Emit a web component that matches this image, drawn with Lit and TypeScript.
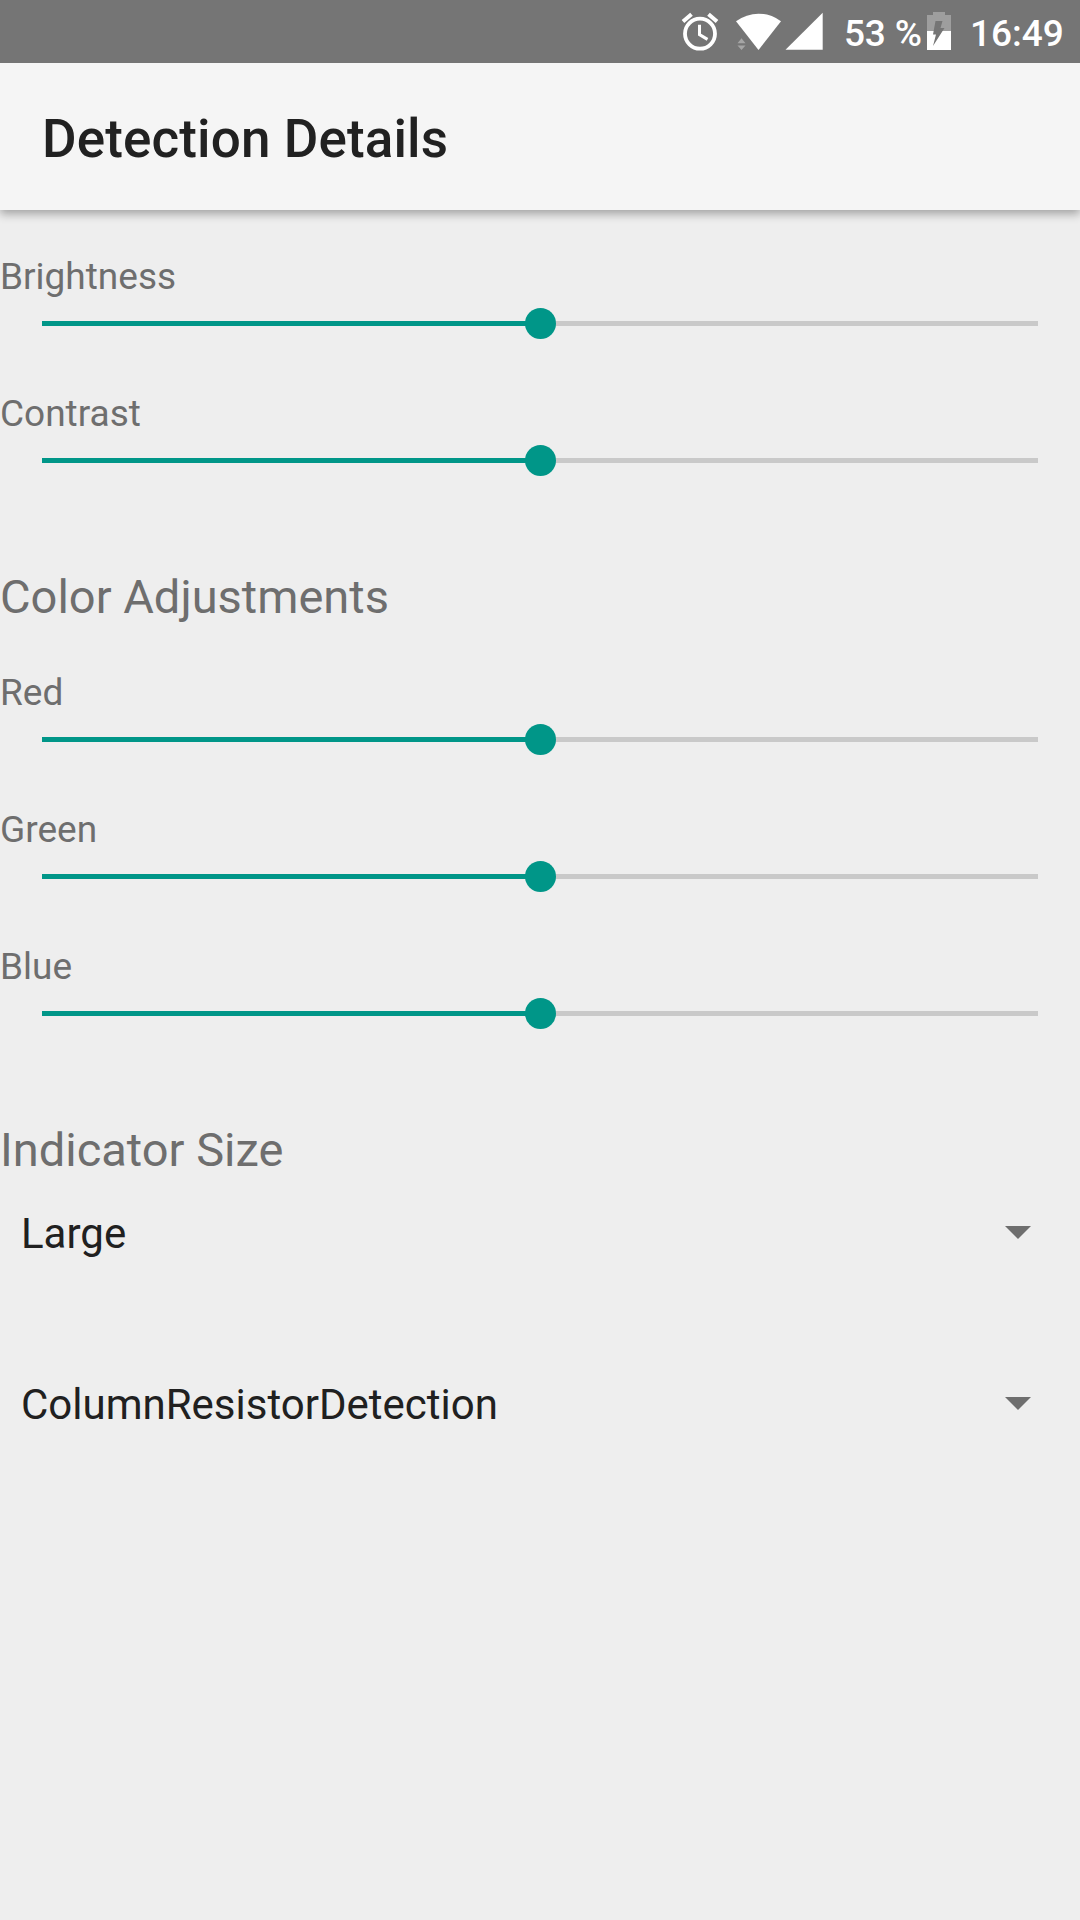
import { LitElement, html, css } from "lit";
import { customElement, property } from "lit/decorators.js";

@customElement("status-bar")
class StatusBar extends LitElement {
  static styles = css`
    :host {
      display: flex;
      align-items: flex-start;
      height: 63px;
      padding-left: 670px;
      box-sizing: border-box;
      background: #757575;
      color: #fff;
      font-weight: 500;
      font-size: 37px;
      line-height: 43px;
      white-space: pre;
    }
    svg {
      display: block;
      flex: none;
    }
    .level {
      margin: 12px 0 0 4px;
      width: 83px;
      letter-spacing: -0.2px;
    }
    .clock {
      margin: 12px 0 0 13px;
    }
  `;
  render() {
    return html`
      <svg width="170" height="63" viewBox="0 0 170 63" fill="#fff">
        <circle cx="30" cy="33.7" r="15" fill="none" stroke="#fff" stroke-width="3.8" />
        <path d="M29.5 24.8V34.6L37.5 39.4" fill="none" stroke="#fff" stroke-width="3" />
        <path d="M13 21.5L21.5 14.2M38.5 14.2L47 21.5" fill="none" stroke="#fff" stroke-width="4" />
        <path d="M66 21.3Q76.5 13.7 88.5 13.7T111 21.3L88.5 50Z" />
        <path d="M67.5 43.3L71.5 38.3L75.5 43.3ZM67.5 45.5H75.5L71.5 50Z" fill="#a5a5a5" />
        <path d="M152.7 12.7V49.7H115.5Z" />
      </svg>
      <span class="level">53 %</span>
      <svg width="30" height="63" viewBox="0 0 30 63">
        <path d="M6 12H18V15H24V50H0V15H6Z" fill="#9e9e9e" />
        <path d="M0 31H24V50H0Z" fill="#fff" />
        <path d="M8.5 21H15.5L13.5 28H17.5L6 46L9 34.5H6Z" fill="#757575" />
      </svg>
      <span class="clock">16:49</span>
    `;
  }
}

@customElement("seek-row")
class SeekRow extends LitElement {
  @property() label = "";
  @property({ type: Number }) value = 50;
  static styles = css`
    :host {
      display: block;
      height: 94px;
    }
    .label {
      height: 43px;
      line-height: 43px;
      font-size: 37px;
      color: #6e6e6e;
    }
    .seek {
      display: flex;
      align-items: center;
      height: 51px;
      padding: 0 42px;
    }
    .track {
      flex: 1;
      height: 5px;
      background: #c9c9c9;
      display: flex;
      align-items: center;
    }
    .fill {
      height: 5px;
      background: #009688;
    }
    .thumb {
      flex: none;
      width: 31px;
      height: 31px;
      margin-left: -15px;
      border-radius: 50%;
      background: #009688;
    }
  `;
  render() {
    return html`
      <div class="label">${this.label}</div>
      <div class="seek">
        <div class="track">
          <div class="fill" style="width:${this.value}%"></div>
          <div class="thumb"></div>
        </div>
      </div>
    `;
  }
}

@customElement("spinner-row")
class SpinnerRow extends LitElement {
  @property() value = "";
  static styles = css`
    :host {
      display: flex;
      justify-content: space-between;
      align-items: flex-start;
      height: 49px;
      padding: 0 49.5px 0 21px;
      font-size: 42px;
      line-height: 49px;
      color: #202020;
    }
    svg {
      display: block;
      margin-top: 17px;
    }
  `;
  render() {
    return html`
      <span>${this.value}</span>
      <svg width="26" height="13" viewBox="0 0 26 13"><path d="M0 0H26L13 13Z" fill="#6e6e6e" /></svg>
    `;
  }
}

@customElement("app-root")
class AppRoot extends LitElement {
  static styles = css`
    :host {
      display: flex;
      flex-direction: column;
      width: 1080px;
      height: 1920px;
      overflow: hidden;
      background: #eee;
      font-family: Roboto, sans-serif;
    }
    status-bar {
      flex: none;
      z-index: 1;
    }
    .toolbar {
      flex: none;
      display: flex;
      align-items: center;
      height: 147px;
      box-sizing: border-box;
      padding: 4px 0 0 42px;
      background: #f5f5f5;
      box-shadow: 0 4px 9px rgba(0, 0, 0, 0.32);
      color: #212121;
      font-size: 53px;
      line-height: 62px;
      font-weight: 500;
      letter-spacing: 0.12px;
    }
    .sliders {
      display: flex;
      flex-direction: column;
      gap: 43px;
    }
    .basic {
      margin-top: 45px;
    }
    .section {
      height: 55px;
      margin-top: 83px;
      font-size: 47px;
      line-height: 55px;
      color: #6e6e6e;
    }
    .colors {
      margin-top: 47px;
    }
    .choices {
      display: flex;
      flex-direction: column;
      gap: 122px;
      margin-top: 32px;
    }
  `;
  render() {
    return html`
      <status-bar></status-bar>
      <div class="toolbar">Detection Details</div>
      <div class="sliders basic">
        ${["Brightness", "Contrast"].map((l) => html`<seek-row label=${l}></seek-row>`)}
      </div>
      <div class="section">Color Adjustments</div>
      <div class="sliders colors">
        ${["Red", "Green", "Blue"].map((l) => html`<seek-row label=${l}></seek-row>`)}
      </div>
      <div class="section">Indicator Size</div>
      <div class="choices">
        ${["Large", "ColumnResistorDetection"].map((v) => html`<spinner-row value=${v}></spinner-row>`)}
      </div>
    `;
  }
}
